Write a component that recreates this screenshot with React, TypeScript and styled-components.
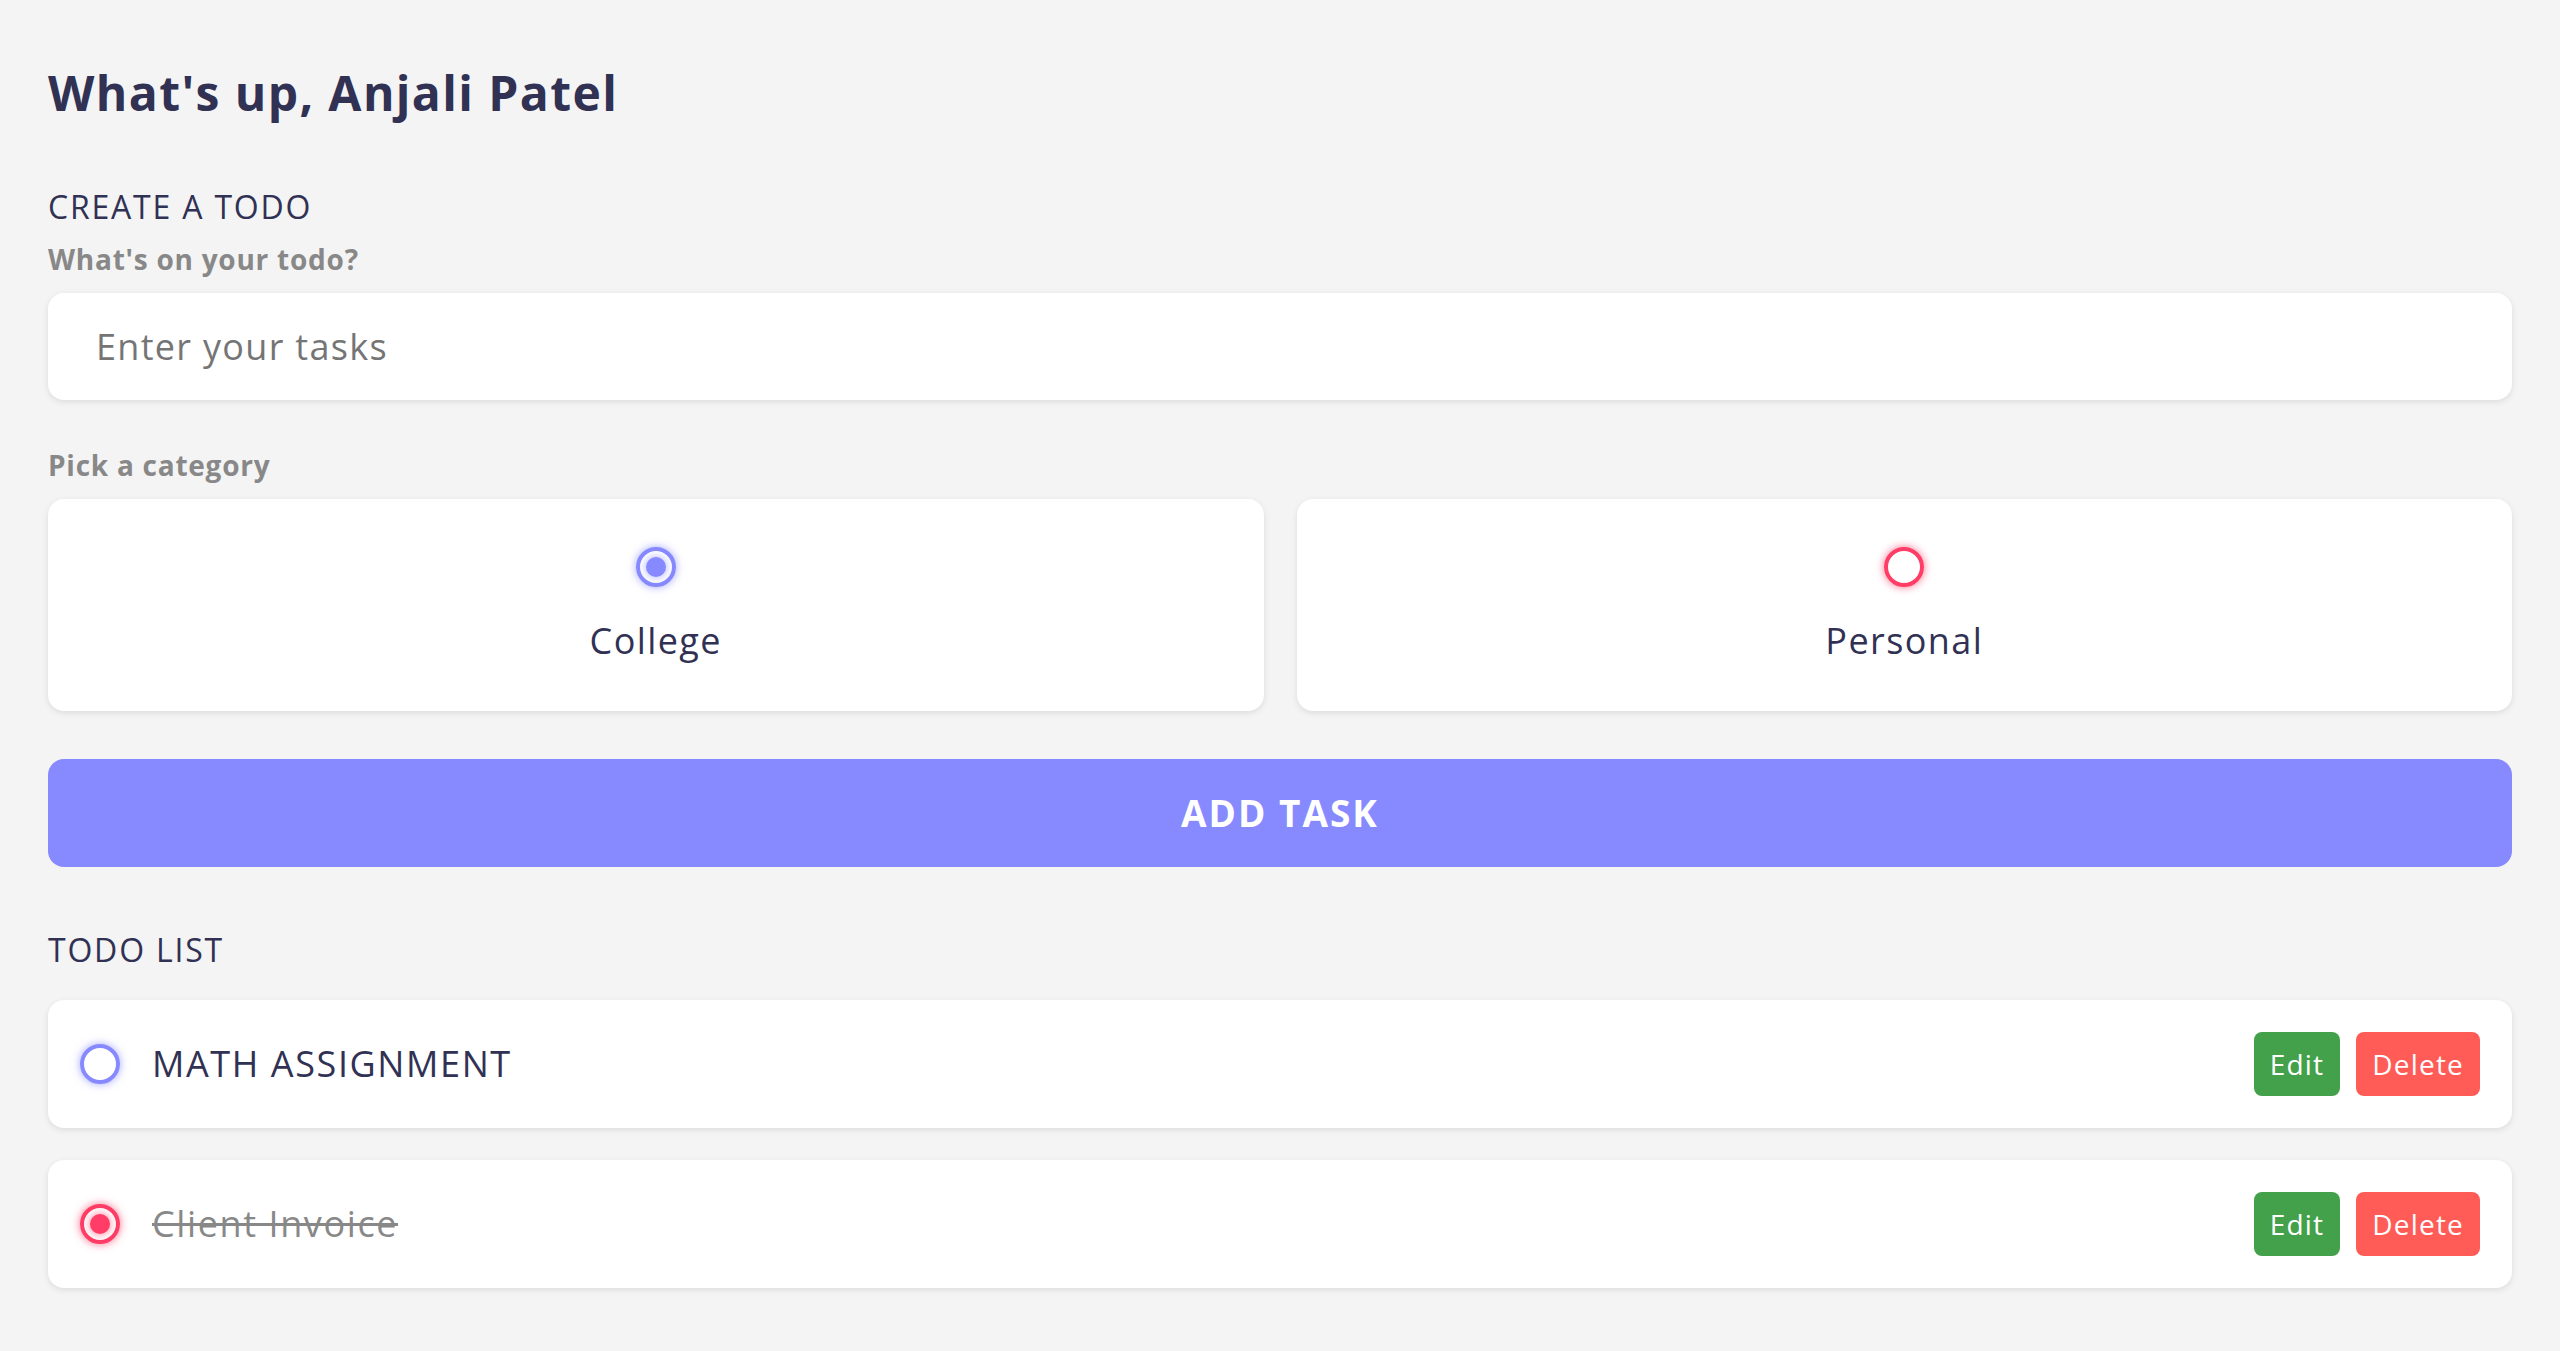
import React, { useState } from "react";
import styled, { createGlobalStyle, css } from "styled-components";

const GlobalStyle = createGlobalStyle`
  * {
    margin: 0;
    padding: 0;
    box-sizing: border-box;
    font-family: "Open Sans", "Noto Sans", sans-serif;
  }
  body {
    background: #f4f4f4;
    color: #313154;
  }
`;

type Category = "college" | "personal";

const colors: Record<Category, { main: string; glow: string }> = {
  college: { main: "#8789fe", glow: "rgba(135, 137, 254, 0.75)" },
  personal: { main: "#ff3d66", glow: "rgba(255, 61, 102, 0.75)" },
};

interface Todo {
  id: number;
  content: string;
  category: Category;
  done: boolean;
}

const App: React.FC = () => {
  const [category, setCategory] = useState<Category>("college");
  const [todos] = useState<Todo[]>([
    { id: 1, content: "MATH ASSIGNMENT", category: "college", done: false },
    { id: 2, content: "Client Invoice", category: "personal", done: true },
  ]);

  return (
    <Main>
      <GlobalStyle />
      <Greeting>
        <Title>What's up, Anjali Patel</Title>
      </Greeting>

      <Section>
        <SectionTitle>CREATE A TODO</SectionTitle>
        <Label>What's on your todo?</Label>
        <TaskInput type="text" placeholder="Enter your tasks" />

        <Label>Pick a category</Label>
        <Options>
          <OptionCard onClick={() => setCategory("college")}>
            <Bubble $cat="college" $checked={category === "college"} />
            <OptionText>College</OptionText>
          </OptionCard>
          <OptionCard onClick={() => setCategory("personal")}>
            <Bubble $cat="personal" $checked={category === "personal"} />
            <OptionText>Personal</OptionText>
          </OptionCard>
        </Options>

        <AddButton type="button">ADD TASK</AddButton>
      </Section>

      <Section>
        <SectionTitle>TODO LIST</SectionTitle>
        <List>
          {todos.map((todo) => (
            <TodoItem key={todo.id}>
              <Bubble $cat={todo.category} $checked={todo.done} />
              <TodoContent $done={todo.done}>{todo.content}</TodoContent>
              <Actions>
                <ActionButton $variant="edit">Edit</ActionButton>
                <ActionButton $variant="delete">Delete</ActionButton>
              </Actions>
            </TodoItem>
          ))}
        </List>
      </Section>
    </Main>
  );
};

export default App;

/* Styled Components */
const Main = styled.main`
  padding: 0 48px;
`;

const Greeting = styled.section`
  padding-top: 64px;
  margin-bottom: 65px;
`;

const Title = styled.h2`
  font-size: 48px;
  line-height: 58px;
  font-weight: 700;
  color: #313154;
  letter-spacing: 1.4px;
`;

const Section = styled.section`
  margin-bottom: 63px;
`;

const SectionTitle = styled.h3`
  font-size: 32px;
  line-height: 39px;
  font-weight: 400;
  color: #313154;
  letter-spacing: 1.8px;
  margin-bottom: 16px;
`;

const Label = styled.h4`
  font-size: 28px;
  line-height: 35px;
  font-weight: 700;
  color: #888888;
  letter-spacing: 0.75px;
  margin-bottom: 16px;
`;

const TaskInput = styled.input`
  display: block;
  width: 100%;
  font-size: 36px;
  line-height: 43px;
  letter-spacing: 1.3px;
  padding: 32px 48px;
  color: #313154;
  background: #ffffff;
  border: none;
  outline: none;
  border-radius: 16px;
  box-shadow: 0 2px 6px rgba(0, 0, 0, 0.1);
  margin-bottom: 48px;

  &::placeholder {
    color: #757575;
  }
`;

const Options = styled.div`
  display: grid;
  grid-template-columns: repeat(2, 1fr);
  gap: 33px;
  margin-bottom: 48px;
`;

const OptionCard = styled.label`
  display: flex;
  flex-direction: column;
  align-items: center;
  justify-content: center;
  background: #ffffff;
  padding: 48px;
  border-radius: 16px;
  box-shadow: 0 2px 6px rgba(0, 0, 0, 0.1);
  cursor: pointer;
`;

const OptionText = styled.div`
  font-size: 36px;
  line-height: 44px;
  letter-spacing: 1.4px;
  color: #313154;
  margin-top: 32px;
`;

const Bubble = styled.span<{ $cat: Category; $checked: boolean }>`
  display: flex;
  align-items: center;
  justify-content: center;
  flex-shrink: 0;
  width: 40px;
  height: 40px;
  border-radius: 999px;
  border: 4px solid ${(p) => colors[p.$cat].main};
  box-shadow: 0 0 8px ${(p) => colors[p.$cat].glow};

  ${(p) =>
    p.$checked &&
    css`
      &::after {
        content: "";
        display: block;
        width: 20px;
        height: 20px;
        border-radius: 999px;
        background: ${colors[p.$cat].main};
        box-shadow: 0 0 8px ${colors[p.$cat].glow};
      }
    `}
`;

const AddButton = styled.button`
  display: block;
  width: 100%;
  font-size: 37px;
  line-height: 44px;
  font-weight: 700;
  letter-spacing: 2px;
  padding: 32px 48px;
  color: #ffffff;
  background: #8789fe;
  border: none;
  border-radius: 16px;
  cursor: pointer;
`;

const List = styled.div`
  margin-top: 31px;
`;

const TodoItem = styled.div`
  display: flex;
  align-items: center;
  background: #ffffff;
  padding: 32px;
  border-radius: 16px;
  box-shadow: 0 2px 6px rgba(0, 0, 0, 0.1);
  margin-bottom: 32px;

  & > span {
    margin-right: 32px;
  }
`;

const TodoContent = styled.div<{ $done: boolean }>`
  flex: 1 1 0%;
  font-size: 36px;
  line-height: 44px;
  letter-spacing: 1.6px;
  color: ${(p) => (p.$done ? "#888888" : "#313154")};
  text-decoration: ${(p) => (p.$done ? "line-through" : "none")};
`;

const Actions = styled.div`
  display: flex;
  align-items: center;
  gap: 16px;
`;

const ActionButton = styled.button<{ $variant: "edit" | "delete" }>`
  display: block;
  padding: 16px;
  font-size: 28px;
  line-height: 32px;
  letter-spacing: 1.2px;
  border: none;
  border-radius: 8px;
  color: #ffffff;
  cursor: pointer;
  background: ${(p) => (p.$variant === "edit" ? "#43a14b" : "#ff5b57")};
`;
